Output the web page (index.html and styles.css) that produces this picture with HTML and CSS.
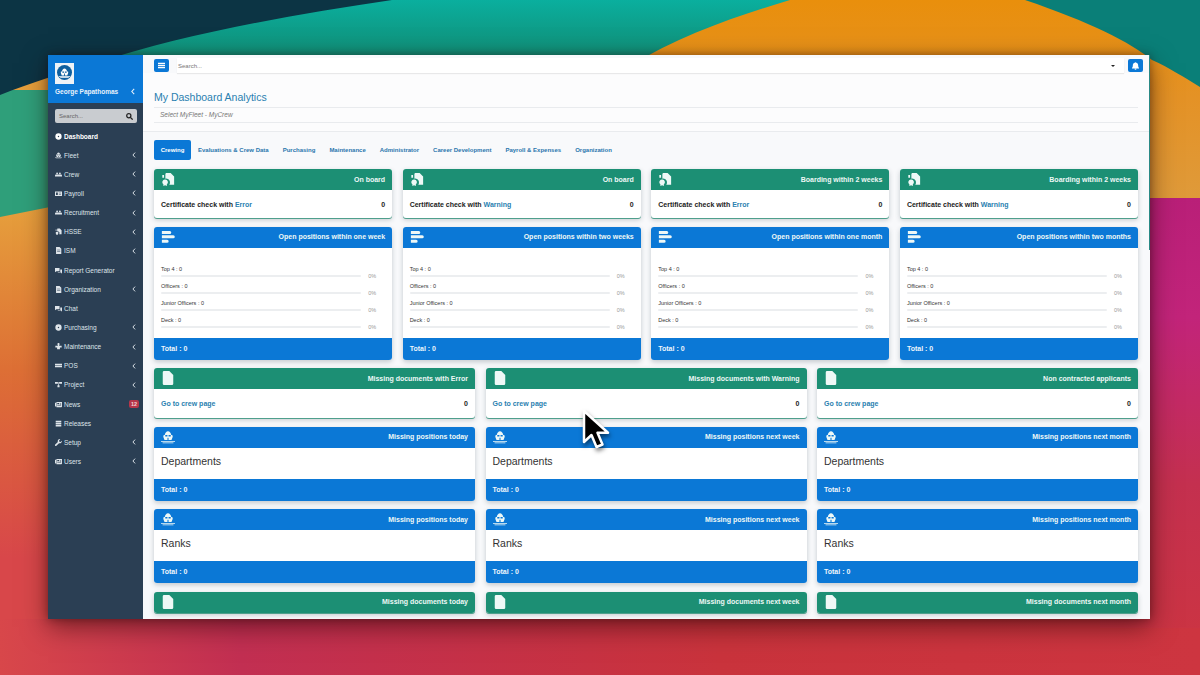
FILE: index.html
```html
<!DOCTYPE html>
<html lang="en">
<head>
  <meta charset="UTF-8" />
  <title>My Dashboard Analytics</title>
  <link rel="stylesheet" href="styles.css">
</head>
<body>

<svg width="0" height="0" class="defs">
  <symbol id="i-cert" viewBox="0 0 16 16">
    <path fill="currentColor" d="M6 1h5l4 4v9.500H9.500a4.500 4.500 0 0 0-1.500-6.500 4.500 4.500 0 0 0-3 -.4V2.500A1.500 1.500 0 0 1 6 1z"/>
    <path fill="currentColor" d="M4.700 8.500a3 3 0 0 1 2 5.400V16l-2-1-2 1v-2.100a3 3 0 0 1 2-5.400zM1.500 3.500h2v3h-2z"/>
  </symbol>
  <symbol id="i-bars" viewBox="0 0 16 16">
    <path fill="currentColor" d="M1 1h9a1 1 0 0 1 0 3.500H1zM1 6h13a1 1 0 0 1 0 3.500H1zM1 11h6a1 1 0 0 1 0 3.500H1z"/>
  </symbol>
  <symbol id="i-file" viewBox="0 0 16 16">
    <path fill="currentColor" d="M3.500 0h6L14 4.500v10a1.500 1.500 0 0 1-1.500 1.500h-9A1.500 1.500 0 0 1 2 14.500v-13A1.500 1.500 0 0 1 3.500 0z"/>
  </symbol>
  <symbol id="i-ship" viewBox="0 0 18 16">
    <path fill="currentColor" fill-rule="evenodd" d="M5 5c0-2 2-4.500 4-4.500S13 3 13 5l2 1v2l-1.500 4h-3.800V9H8.300v3H4.500L3 8V6zM5.500 5.500v2h2.800v-2zM9.700 5.500v2h2.800v-2z"/>
    <path fill="currentColor" d="M0 13h18v1.200H0zM2 15h14v1H2z"/>
  </symbol>
  <symbol id="i-gauge" viewBox="0 0 10 10"><path fill="currentColor" d="M5 .5a4.500 4.500 0 1 1 0 9 4.500 4.500 0 0 1 0-9zM5 4a1 1 0 1 0 0 2 1 1 0 0 0 0-2z"/></symbol>
  <symbol id="i-users" viewBox="0 0 10 10"><path fill="currentColor" d="M3 2a1.300 1.300 0 1 1 0 2.600A1.300 1.300 0 0 1 3 2zM7 2a1.300 1.300 0 1 1 0 2.600A1.300 1.300 0 0 1 7 2zM0 8V6.500C0 5.700.8 5 1.500 5h3c.3 0 .5.100.5.100.1 0 .2-.1.500-.1h3c.7 0 1.500.7 1.500 1.500V8z"/></symbol>
  <symbol id="i-card" viewBox="0 0 10 10"><path fill="currentColor" d="M0 2h10v6.500H0zM1.500 3.500V7H4V3.500zM5.500 4v.8h3V4zM5.500 5.700v.8h3v-.8z" fill-rule="evenodd"/></symbol>
  <symbol id="i-doc" viewBox="0 0 10 10"><path fill="currentColor" fill-rule="evenodd" d="M1.500 0h5L9 2.500V10H1.500zM3 4v.8h4.500V4zM3 6v.8h4.500V6z"/></symbol>
  <symbol id="i-chat" viewBox="0 0 10 10"><path fill="currentColor" d="M0 1.500h6.500v4.500H2L0 7.500zM7.500 3.500H10v6L8.500 8H4V7h3.500z"/></symbol>
  <symbol id="i-wrench" viewBox="0 0 10 10"><path fill="currentColor" d="M9.800 2.500a3 3 0 0 1-4 3.400L2 9.700a1 1 0 0 1-1.700-1.700L4.100 4.200A3 3 0 0 1 7.500.2L5.800 2l.4 1.800 1.800.4z"/></symbol>
  <symbol id="i-lines" viewBox="0 0 10 10"><path fill="currentColor" d="M0 2.500h10v2H0zM0 5.500h10v2H0z"/></symbol>
  <symbol id="i-tree" viewBox="0 0 10 10"><path fill="currentColor" d="M0 1.500h4v2.500H0zM6 1.500h4v2.500H6zM4 2.300h2v1H4zM3.500 6h3v3h-3zM4.500 3.500h1V6h-1z"/></symbol>
  <symbol id="i-stack" viewBox="0 0 10 10"><path fill="currentColor" d="M1 1h8v2.300H1zM1 4h8v2.300H1zM1 7h8v2.300H1z"/></symbol>
  <symbol id="i-hand" viewBox="0 0 10 10"><path fill="currentColor" d="M5 0a1.500 1.500 0 0 1 1 2.700V4h3.500v2.500H7V9H3V6.500H.5V4H4V2.700A1.500 1.500 0 0 1 5 0z"/></symbol>
  <symbol id="i-news" viewBox="0 0 10 10"><path fill="currentColor" fill-rule="evenodd" d="M0 2.500h1.500V8H1A1 1 0 0 1 0 7zM2 1.500h8V8a1 1 0 0 1-1 1H2zM3.300 3v1.800h2.500V3zM6.800 3v.7h2V3zM6.800 4.300V5h2v-.7zM3.300 6v.7h5.500V6z"/></symbol>
  <symbol id="i-chev" viewBox="0 0 6 10"><path fill="none" stroke="currentColor" stroke-width="1.600" d="M4.800 1 1.200 5l3.600 4"/></symbol>
</svg>

<svg class="wallpaper" viewBox="0 0 1200 675">
  <defs>
    <linearGradient id="left-fade" x1="0" y1="205" x2="0" y2="675" gradientUnits="userSpaceOnUse">
      <stop offset="0" stop-color="#e6a03c"/>
      <stop offset=".35" stop-color="#dd6f35"/>
      <stop offset=".75" stop-color="#d8474a"/>
      <stop offset="1" stop-color="#d8474a"/>
    </linearGradient>
    <linearGradient id="right-fade" x1="0" y1="198" x2="0" y2="675" gradientUnits="userSpaceOnUse">
      <stop offset="0" stop-color="#b91f78"/>
      <stop offset=".25" stop-color="#c2247a"/>
      <stop offset=".6" stop-color="#c4304f"/>
      <stop offset="1" stop-color="#cd3540"/>
    </linearGradient>
    <linearGradient id="bottom-fade" x1="0" y1="0" x2="1200" y2="0" gradientUnits="userSpaceOnUse">
      <stop offset="0" stop-color="#d8474a"/>
      <stop offset=".2" stop-color="#c22f52"/>
      <stop offset=".6" stop-color="#c9333c"/>
      <stop offset="1" stop-color="#cd3540"/>
    </linearGradient>
    <linearGradient id="teal-fade" x1="0" y1="0" x2="0" y2="62" gradientUnits="userSpaceOnUse">
      <stop offset="0" stop-color="#0aaf9e"/>
      <stop offset="1" stop-color="#128a72"/>
    </linearGradient>
    <linearGradient id="orange-fade" x1="0" y1="0" x2="0" y2="198" gradientUnits="userSpaceOnUse">
      <stop offset="0" stop-color="#e98f0c"/>
      <stop offset=".5" stop-color="#e49226"/>
      <stop offset="1" stop-color="#df9a3a"/>
    </linearGradient>
  </defs>
  <rect width="1200" height="675" fill="url(#left-fade)"/>
  <rect y="619" width="1200" height="56" fill="url(#bottom-fade)"/>
  <rect x="1100" y="198" width="100" height="430" fill="url(#right-fade)"/>
  <path fill="#2f9f7a" d="M0 90H60V205L0 217z"/>
  <path fill="url(#teal-fade)" d="M60 0H800V70H60z"/>
  <path fill="#0c3444" d="M0 0H392C290 15 180 35 100 62 65 72 30 83 0 95z"/>
  <path fill="url(#orange-fade)" d="M630 66C680 35 740 15 790 0H1200V198H1000V66z"/>
  <path fill="#0a7f78" d="M1025 0H1200V87C1185 78 1170 68 1152 60 1130 42 1090 22 1025 0z"/>
</svg>

<div class="window">
  <aside class="sidebar">
    <div class="side-head">
      <div class="logo"><span class="logo-disc"><svg width="11" height="10"><use href="#i-ship"/></svg></span></div>
      <div class="side-user"><span>George Papathomas</span><svg width="4" height="7"><use href="#i-chev"/></svg></div>
    </div>
    <div class="side-search">
      <span>Search...</span>
      <svg width="7" height="7" viewBox="0 0 10 10"><circle cx="4" cy="4" r="3" fill="none" stroke="#222" stroke-width="1.800"/><path d="M6.200 6.200 9.500 9.500" stroke="#222" stroke-width="1.800"/></svg>
    </div>
    <nav class="side-nav">
      <a class="nav-item active"><svg><use href="#i-gauge"/></svg><span>Dashboard</span></a>
      <a class="nav-item"><svg><use href="#i-ship"/></svg><span>Fleet</span><svg class="chev"><use href="#i-chev"/></svg></a>
      <a class="nav-item"><svg><use href="#i-users"/></svg><span>Crew</span><svg class="chev"><use href="#i-chev"/></svg></a>
      <a class="nav-item"><svg><use href="#i-card"/></svg><span>Payroll</span><svg class="chev"><use href="#i-chev"/></svg></a>
      <a class="nav-item"><svg><use href="#i-users"/></svg><span>Recruitment</span><svg class="chev"><use href="#i-chev"/></svg></a>
      <a class="nav-item"><svg><use href="#i-cert"/></svg><span>HSSE</span><svg class="chev"><use href="#i-chev"/></svg></a>
      <a class="nav-item"><svg><use href="#i-doc"/></svg><span>ISM</span><svg class="chev"><use href="#i-chev"/></svg></a>
      <a class="nav-item"><svg><use href="#i-chat"/></svg><span>Report Generator</span></a>
      <a class="nav-item"><svg><use href="#i-doc"/></svg><span>Organization</span><svg class="chev"><use href="#i-chev"/></svg></a>
      <a class="nav-item"><svg><use href="#i-chat"/></svg><span>Chat</span></a>
      <a class="nav-item"><svg><use href="#i-gauge"/></svg><span>Purchasing</span><svg class="chev"><use href="#i-chev"/></svg></a>
      <a class="nav-item"><svg><use href="#i-hand"/></svg><span>Maintenance</span><svg class="chev"><use href="#i-chev"/></svg></a>
      <a class="nav-item"><svg><use href="#i-lines"/></svg><span>POS</span><svg class="chev"><use href="#i-chev"/></svg></a>
      <a class="nav-item"><svg><use href="#i-tree"/></svg><span>Project</span><svg class="chev"><use href="#i-chev"/></svg></a>
      <a class="nav-item"><svg><use href="#i-news"/></svg><span>News</span><b class="badge">12</b></a>
      <a class="nav-item"><svg><use href="#i-stack"/></svg><span>Releases</span></a>
      <a class="nav-item"><svg><use href="#i-wrench"/></svg><span>Setup</span><svg class="chev"><use href="#i-chev"/></svg></a>
      <a class="nav-item"><svg><use href="#i-news"/></svg><span>Users</span><svg class="chev"><use href="#i-chev"/></svg></a>
    </nav>
  </aside>

  <main class="content">
    <div class="topbar">
      <button class="icon-btn"><svg width="7" height="7" viewBox="0 0 10 10"><path fill="#fff" d="M0 1h10v1.800H0zM0 4.100h10v1.800H0zM0 7.200h10V9H0z"/></svg></button>
      <div class="top-search"><span>Search...</span><i class="caret"></i></div>
      <button class="icon-btn bell"><svg width="7" height="8" viewBox="0 0 10 11"><path fill="#fff" d="M5 0a1 1 0 0 1 1 1c2 .4 2.800 2 2.800 3.500 0 2.300.6 3 1.200 3.800v.7H0v-.7c.6-.8 1.200-1.500 1.200-3.800C1.200 3 2 1.400 4 1a1 1 0 0 1 1-1zM3.700 9.500h2.600A1.300 1.300 0 0 1 5 11a1.300 1.300 0 0 1-1.300-1.500z"/></svg></button>
    </div>

    <div class="page-head">
      <h1>My Dashboard Analytics</h1>
      <div class="crumb">Select MyFleet - MyCrew</div>
    </div>

    <div class="tabs">
      <a class="tab active">Crewing</a>
      <a class="tab">Evaluations &amp; Crew Data</a>
      <a class="tab">Purchasing</a>
      <a class="tab">Maintenance</a>
      <a class="tab">Administrator</a>
      <a class="tab">Career Development</a>
      <a class="tab">Payroll &amp; Expenses</a>
      <a class="tab">Organization</a>
    </div>

    <section class="grid four">
      <div class="card green"><div class="card-head"><svg><use href="#i-cert"/></svg><span>On board</span></div><div class="card-line"><span>Certificate check with <a>Error</a></span><b>0</b></div></div>
      <div class="card green"><div class="card-head"><svg><use href="#i-cert"/></svg><span>On board</span></div><div class="card-line"><span>Certificate check with <a>Warning</a></span><b>0</b></div></div>
      <div class="card green"><div class="card-head"><svg><use href="#i-cert"/></svg><span>Boarding within 2 weeks</span></div><div class="card-line"><span>Certificate check with <a>Error</a></span><b>0</b></div></div>
      <div class="card green"><div class="card-head"><svg><use href="#i-cert"/></svg><span>Boarding within 2 weeks</span></div><div class="card-line"><span>Certificate check with <a>Warning</a></span><b>0</b></div></div>
    </section>

    <section class="grid four">
      <div class="card blue">
        <div class="card-head"><svg><use href="#i-bars"/></svg><span>Open positions within one week</span></div>
        <div class="progress-list">
          <div class="progress"><label>Top 4 : 0</label><div class="track"></div><em>0%</em></div>
          <div class="progress"><label>Officers : 0</label><div class="track"></div><em>0%</em></div>
          <div class="progress"><label>Junior Officers : 0</label><div class="track"></div><em>0%</em></div>
          <div class="progress"><label>Deck : 0</label><div class="track"></div><em>0%</em></div>
        </div>
        <div class="card-foot">Total : 0</div>
      </div>
      <div class="card blue">
        <div class="card-head"><svg><use href="#i-bars"/></svg><span>Open positions within two weeks</span></div>
        <div class="progress-list">
          <div class="progress"><label>Top 4 : 0</label><div class="track"></div><em>0%</em></div>
          <div class="progress"><label>Officers : 0</label><div class="track"></div><em>0%</em></div>
          <div class="progress"><label>Junior Officers : 0</label><div class="track"></div><em>0%</em></div>
          <div class="progress"><label>Deck : 0</label><div class="track"></div><em>0%</em></div>
        </div>
        <div class="card-foot">Total : 0</div>
      </div>
      <div class="card blue">
        <div class="card-head"><svg><use href="#i-bars"/></svg><span>Open positions within one month</span></div>
        <div class="progress-list">
          <div class="progress"><label>Top 4 : 0</label><div class="track"></div><em>0%</em></div>
          <div class="progress"><label>Officers : 0</label><div class="track"></div><em>0%</em></div>
          <div class="progress"><label>Junior Officers : 0</label><div class="track"></div><em>0%</em></div>
          <div class="progress"><label>Deck : 0</label><div class="track"></div><em>0%</em></div>
        </div>
        <div class="card-foot">Total : 0</div>
      </div>
      <div class="card blue">
        <div class="card-head"><svg><use href="#i-bars"/></svg><span>Open positions within two months</span></div>
        <div class="progress-list">
          <div class="progress"><label>Top 4 : 0</label><div class="track"></div><em>0%</em></div>
          <div class="progress"><label>Officers : 0</label><div class="track"></div><em>0%</em></div>
          <div class="progress"><label>Junior Officers : 0</label><div class="track"></div><em>0%</em></div>
          <div class="progress"><label>Deck : 0</label><div class="track"></div><em>0%</em></div>
        </div>
        <div class="card-foot">Total : 0</div>
      </div>
    </section>

    <section class="grid three docs">
      <div class="card green"><div class="card-head"><svg><use href="#i-file"/></svg><span>Missing documents with Error</span></div><div class="card-line"><a>Go to crew page</a><b>0</b></div></div>
      <div class="card green"><div class="card-head"><svg><use href="#i-file"/></svg><span>Missing documents with Warning</span></div><div class="card-line"><a>Go to crew page</a><b>0</b></div></div>
      <div class="card green"><div class="card-head"><svg><use href="#i-file"/></svg><span>Non contracted applicants</span></div><div class="card-line"><a>Go to crew page</a><b>0</b></div></div>
    </section>

    <section class="grid three">
      <div class="card blue"><div class="card-head"><svg><use href="#i-ship"/></svg><span>Missing positions today</span></div><div class="card-title">Departments</div><div class="card-foot">Total : 0</div></div>
      <div class="card blue"><div class="card-head"><svg><use href="#i-ship"/></svg><span>Missing positions next week</span></div><div class="card-title">Departments</div><div class="card-foot">Total : 0</div></div>
      <div class="card blue"><div class="card-head"><svg><use href="#i-ship"/></svg><span>Missing positions next month</span></div><div class="card-title">Departments</div><div class="card-foot">Total : 0</div></div>
    </section>

    <section class="grid three">
      <div class="card blue"><div class="card-head"><svg><use href="#i-ship"/></svg><span>Missing positions today</span></div><div class="card-title">Ranks</div><div class="card-foot">Total : 0</div></div>
      <div class="card blue"><div class="card-head"><svg><use href="#i-ship"/></svg><span>Missing positions next week</span></div><div class="card-title">Ranks</div><div class="card-foot">Total : 0</div></div>
      <div class="card blue"><div class="card-head"><svg><use href="#i-ship"/></svg><span>Missing positions next month</span></div><div class="card-title">Ranks</div><div class="card-foot">Total : 0</div></div>
    </section>

    <section class="grid three">
      <div class="card green"><div class="card-head"><svg><use href="#i-file"/></svg><span>Missing documents today</span></div></div>
      <div class="card green"><div class="card-head"><svg><use href="#i-file"/></svg><span>Missing documents next week</span></div></div>
      <div class="card green"><div class="card-head"><svg><use href="#i-file"/></svg><span>Missing documents next month</span></div></div>
    </section>
  </main>
</div>

<svg class="cursor" width="30" height="44" viewBox="0 0 30 44">
  <path d="M2 2v31l7.500-7 5 12 6-2.500-5-11.800H26z" fill="#000" stroke="#fff" stroke-width="2.500" stroke-linejoin="round"/>
</svg>

</body>
</html>
```

FILE: styles.css
```css
* {
  box-sizing: border-box;
}
html, body {
  height: 100%;
}
body {
  margin: 0;
  padding: 55px 50px 56px 48px;
  overflow: hidden;
  font-family: "Liberation Sans", Arial, sans-serif;
  color: #222;
  background: #c93a4c;
}
.defs {
  position: absolute;
}
.wallpaper {
  position: absolute;
  left: 0;
  top: 0;
  width: 1200px;
  height: 675px;
}
.cursor {
  position: absolute;
  left: 582px;
  top: 409px;
  filter: drop-shadow(1px 3px 2px rgba(0,0,0,0.5));
}

/* window */
.window {
  position: relative;
  display: flex;
  height: 564px;
  background: #f8f9fb;
  box-shadow: 0 8px 24px rgba(30,0,0,0.5), 0 0 8px rgba(30,0,0,0.35);
}
.window::after {
  content: "";
  position: absolute;
  right: 0;
  top: 0;
  width: 1px;
  height: 195px;
  background: #2a8a86;
}

/* sidebar */
.sidebar {
  width: 95px;
  flex: none;
  background: #2b3f54;
  color: #dfe5ea;
}
.side-head {
  height: 48px;
  padding: 8px 7px 0;
  background: #0b78d6;
}
.logo {
  width: 19px;
  height: 21px;
  padding: 2px;
  background: #eef3f7;
}
.logo-disc {
  display: flex;
  align-items: center;
  justify-content: center;
  width: 15px;
  height: 15px;
  border-radius: 50%;
  color: #fff;
  background: #0e5f9e;
}
.side-user {
  display: flex;
  justify-content: space-between;
  align-items: center;
  margin-top: 4px;
  padding-right: 1px;
  font-size: 6.5px;
  font-weight: bold;
  color: #e6f1fb;
}
.side-search {
  display: flex;
  justify-content: space-between;
  align-items: center;
  height: 14px;
  margin: 6px 6px 0 7px;
  padding: 0 4px;
  border-radius: 2px;
  font-size: 6px;
  color: #666;
  background: #c9ccd0;
}
.side-nav {
  margin-top: 3.500px;
}
.nav-item {
  display: flex;
  align-items: center;
  gap: 2px;
  height: 19.150px;
  padding: 0 7px;
  font-size: 6.500px;
}
.nav-item svg {
  width: 7px;
  height: 7px;
  flex: none;
}
.nav-item span {
  flex: 1;
}
.nav-item .chev {
  width: 4px;
  height: 6px;
}
.nav-item.active {
  font-weight: bold;
  color: #fff;
}
.badge {
  padding: 1px 2px;
  margin-right: -3px;
  border-radius: 2px;
  font-size: 5.500px;
  color: #f3d0d3;
  background: #b5364a;
}

/* main column */
.content {
  flex: 1;
  min-width: 0;
  height: 564px;
  overflow: hidden;
  padding: 3px 12px 0 11px;
}
.topbar {
  display: flex;
  align-items: center;
  gap: 8px;
  height: 15px;
  margin-right: -5px;
}
.icon-btn {
  display: flex;
  align-items: center;
  justify-content: center;
  width: 15px;
  height: 13px;
  padding: 0;
  border: 0;
  border-radius: 2px;
  background: #0b78d6;
}
.icon-btn.bell {
  margin-left: -4px;
}
.top-search {
  flex: 1;
  display: flex;
  justify-content: space-between;
  align-items: center;
  height: 15px;
  padding: 0 9px 0 1px;
  font-size: 6px;
  color: #777;
  background: #fff;
  box-shadow: 0 1px 1px rgba(0,0,0,0.08);
}
.caret {
  border-top: 2px solid #222;
  border-left: 2px solid transparent;
  border-right: 2px solid transparent;
}
.page-head {
  margin: 0 -12px 0 -11px;
  padding: 17px 12px 8px 11px;
  border-bottom: 1px solid #e9ebee;
  background: #fcfcfd;
}
h1 {
  margin: 0 0 3px;
  font-size: 10.500px;
  font-weight: normal;
  line-height: 14px;
  color: #2a7fb0;
}
.crumb {
  height: 16px;
  padding-left: 6px;
  border-top: 1px solid #e9ebee;
  border-bottom: 1px solid #e9ebee;
  font-size: 6.500px;
  font-style: italic;
  line-height: 14px;
  color: #777;
}
.tabs {
  display: flex;
  gap: 14px;
  margin: 8px 0 9px;
}
.tab {
  height: 20px;
  padding: 0;
  font-size: 6px;
  font-weight: bold;
  line-height: 20px;
  color: #2a76ad;
}
.tab.active {
  width: 37px;
  margin-right: -7px;
  border-radius: 2px;
  text-align: center;
  color: #fff;
  background: #0b78d6;
}

/* cards */
.grid {
  display: grid;
  gap: 9px 10.500px;
  margin-bottom: 8.500px;
}
.grid.four {
  grid-template-columns: repeat(4, 1fr);
}
.grid.three {
  grid-template-columns: repeat(3, 1fr);
}
.card {
  overflow: hidden;
  border-radius: 3px;
  background: #fff;
}
.card.green {
  box-shadow: 0 1px 0 #4f9f8c, 0 2px 5px rgba(40,60,70,0.25);
}
.card.blue {
  box-shadow: 0 2px 5px rgba(40,60,70,0.25);
}
.card-head {
  display: flex;
  justify-content: space-between;
  align-items: center;
  height: 21px;
  padding: 0 7px 1px;
  font-size: 7px;
  font-weight: bold;
  color: #eef8f6;
}
.card-head svg {
  width: 14px;
  height: 14px;
}
.green .card-head {
  background: #1c8f74;
}
.blue .card-head,
.card-foot {
  background: #0b78d6;
}
.card-line {
  display: flex;
  justify-content: space-between;
  align-items: center;
  height: 28px;
  padding: 0 7px;
  font-size: 7px;
  font-weight: bold;
}
.docs .card-line {
  height: 29px;
}
.card-line a {
  color: #2a7fb0;
}
.card-foot {
  height: 22px;
  padding: 0 7px;
  font-size: 7px;
  font-weight: bold;
  line-height: 21px;
  color: #eef6fc;
}
.card-title {
  height: 31px;
  padding: 0 7px;
  font-size: 10.500px;
  line-height: 27px;
  color: #333;
}
.progress-list {
  height: 90px;
  padding-top: 16px;
}
.progress {
  position: relative;
  height: 17px;
  padding: 0 31px 0 7px;
}
.progress label {
  display: block;
  font-size: 5.500px;
  line-height: 10px;
  color: #333;
}
.track {
  height: 2px;
  margin-top: 1px;
  border-radius: 1px;
  background: #eceef0;
}
.progress em {
  position: absolute;
  right: 16px;
  top: 9px;
  font-size: 5.500px;
  font-style: normal;
  color: #999;
}
```
